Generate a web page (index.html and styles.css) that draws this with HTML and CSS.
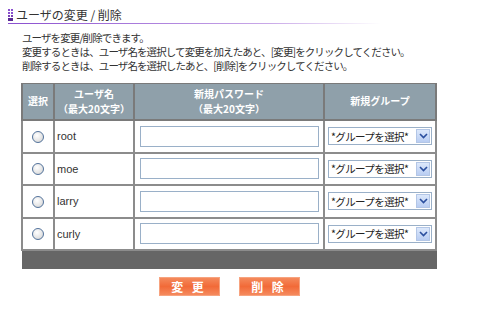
FILE: index.html
```html
<!DOCTYPE html>
<html lang="ja">
<head>
    <meta charset="UTF-8">
    <title>ユーザの変更 / 削除</title>
    <link rel="stylesheet" href="styles.css">
</head>
<body>
    <h1 class="page-title">
        <svg class="title-mark" width="5" height="12" viewBox="0 0 5 12">
            <rect x="0" y="0" width="2" height="2" fill="#8a4fcf"/>
            <rect x="3" y="0" width="2" height="2" fill="#8a4fcf"/>
            <rect x="0" y="3" width="2" height="2" fill="#8a4fcf"/>
            <rect x="3" y="3" width="2" height="2" fill="#8a4fcf"/>
            <rect x="0" y="6" width="2" height="2" fill="#7a3fb8"/>
            <rect x="3" y="6" width="2" height="2" fill="#7a3fb8"/>
            <rect x="0" y="9" width="5" height="3" fill="#5a2a94"/>
        </svg>
        <span>ユーザの変更 / 削除</span>
    </h1>

    <div class="intro">
        <p>ユーザを変更/削除できます。</p>
        <p>変更するときは、ユーザ名を選択して変更を加えたあと、[変更]をクリックしてください。</p>
        <p>削除するときは、ユーザ名を選択したあと、[削除]をクリックしてください。</p>
    </div>

    <form id="userForm">
        <table class="user-table">
            <thead>
                <tr>
                    <th class="col-sel">選択</th>
                    <th class="col-name">ユーザ名<br>（最大20文字）</th>
                    <th class="col-pass">新規パスワード<br>（最大20文字）</th>
                    <th class="col-group">新規グループ</th>
                </tr>
            </thead>
            <tbody>
                <tr>
                    <td class="c"><input type="radio" name="user" value="root"></td>
                    <td>root</td>
                    <td><input type="password" class="pass"></td>
                    <td>
                        <div class="select-box">
                            <select><option>*グループを選択*</option></select>
                            <span class="arrow"><svg width="9" height="6" viewBox="0 0 9 6"><path d="M1 1 L4.5 4.5 L8 1" fill="none" stroke="#2b4f9e" stroke-width="1.6"/></svg></span>
                        </div>
                    </td>
                </tr>
                <tr>
                    <td class="c"><input type="radio" name="user" value="moe"></td>
                    <td>moe</td>
                    <td><input type="password" class="pass"></td>
                    <td>
                        <div class="select-box">
                            <select><option>*グループを選択*</option></select>
                            <span class="arrow"><svg width="9" height="6" viewBox="0 0 9 6"><path d="M1 1 L4.5 4.5 L8 1" fill="none" stroke="#2b4f9e" stroke-width="1.6"/></svg></span>
                        </div>
                    </td>
                </tr>
                <tr>
                    <td class="c"><input type="radio" name="user" value="larry"></td>
                    <td>larry</td>
                    <td><input type="password" class="pass"></td>
                    <td>
                        <div class="select-box">
                            <select><option>*グループを選択*</option></select>
                            <span class="arrow"><svg width="9" height="6" viewBox="0 0 9 6"><path d="M1 1 L4.5 4.5 L8 1" fill="none" stroke="#2b4f9e" stroke-width="1.6"/></svg></span>
                        </div>
                    </td>
                </tr>
                <tr>
                    <td class="c"><input type="radio" name="user" value="curly"></td>
                    <td>curly</td>
                    <td><input type="password" class="pass"></td>
                    <td>
                        <div class="select-box">
                            <select><option>*グループを選択*</option></select>
                            <span class="arrow"><svg width="9" height="6" viewBox="0 0 9 6"><path d="M1 1 L4.5 4.5 L8 1" fill="none" stroke="#2b4f9e" stroke-width="1.6"/></svg></span>
                        </div>
                    </td>
                </tr>
                <tr class="foot">
                    <td colspan="4"></td>
                </tr>
            </tbody>
        </table>

        <div class="actions">
            <button type="submit" class="btn">変 更</button>
            <button type="button" class="btn">削 除</button>
        </div>
    </form>
</body>
</html>
```

FILE: styles.css
```css
body { margin: 0; padding: 8px 0 0 8px; font-family: "Noto Sans CJK JP", "DejaVu Sans", sans-serif; font-size: 10px; color: #333; }
.page-title { display: flex; align-items: center; gap: 3px; margin: 0; width: 372px; height: 14px; padding-bottom: 1px; font-size: 12px; font-weight: normal; line-height: 14px; color: #333; border-bottom: 1px solid; border-image: linear-gradient(to right, #8a4fcf, #c9a9e8 70%, #ffffff) 1; }
.title-mark { display: block; }
.intro { margin: 7px 0 0 14px; font-size: 10.5px; letter-spacing: -0.9px; }
.intro p { margin: 0; line-height: 14px; }
.user-table { margin: 10px 0 0 13px; width: 416px; border-collapse: collapse; border: 1px solid #7a7a7a; }
.user-table th { background: #8fa0aa; color: #fff; font-weight: bold; font-size: 10px; line-height: 14.5px; height: 35px; padding: 0; border: 2px solid #7a7a7a; border-top: 0; }
.col-sel { width: 30px; }
.col-name { width: 78px; }
.col-pass { width: 188px; }
.user-table td { height: 30.5px; padding: 0 0 0 2px; border: 2px solid #8c8c8c; border-top-color: #b8b8b8; font-family: "Liberation Sans", Arial, sans-serif; font-size: 11px; color: #333; }
.user-table td.c { padding: 0; text-align: center; }
.user-table input[type="radio"] { appearance: none; -webkit-appearance: none; margin: 0; width: 12px; height: 12px; vertical-align: middle; border: 1px solid #53739c; border-radius: 50%; background: radial-gradient(circle at 40% 35%, #ffffff, #e4e4e4 60%, #c9c9c9); box-sizing: border-box; }
.user-table input[type="radio"]:checked { background: radial-gradient(circle, #2d5ea8 30%, #f4f4f4 40%, #d0d0d0); }
.pass { display: block; width: 179px; height: 21px; box-sizing: border-box; margin: 0 0 0 3px; border: 1px solid #9ab0c8; padding: 2px; }
.select-box { display: flex; width: 104px; height: 18px; box-sizing: border-box; border: 1px solid #9ab0c8; background: #fff; margin-left: 1px; }
.select-box select { flex: 1; min-width: 0; appearance: none; -webkit-appearance: none; border: 0; padding: 0 0 0 2px; margin: 0; background: #fff; font-family: "Noto Sans CJK JP", sans-serif; font-size: 10.5px; letter-spacing: -0.6px; color: #222; outline: none; }
.arrow { display: flex; align-items: center; justify-content: center; width: 14px; margin: 1px; background: linear-gradient(#dce8fb, #b9cdf2); border: 1px solid #b3c6e6; box-sizing: border-box; }
.user-table tr.foot td { height: 17px; background: #666; border: 1px solid #666; padding: 0; }
.actions { display: flex; justify-content: center; gap: 19px; width: 416px; margin: 8px 0 0 13px; }
.btn { width: 61px; height: 19px; padding: 0; border: 1px solid #f7a37f; background: linear-gradient(#f48a5c, #f26a38 50%, #f58a5e); color: #fff; font-family: "Noto Sans CJK JP", sans-serif; font-size: 12px; font-weight: bold; letter-spacing: 3px; line-height: 17px; cursor: pointer; }
```
